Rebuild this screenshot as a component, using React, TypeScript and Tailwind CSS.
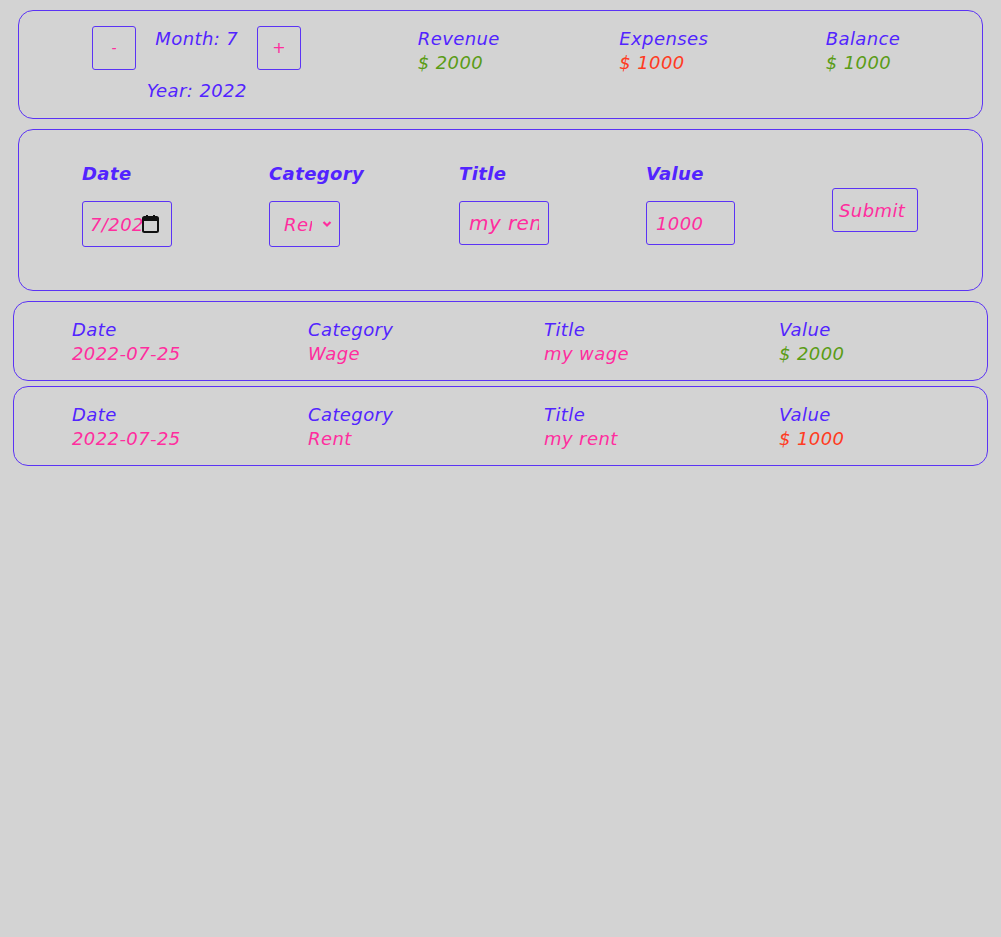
import React from "react";

const P = "text-[#5224ff]";
const PINK = "text-[#ff2d9e]";
const GREEN = "text-[#5a9c16]";
const RED = "text-[#ff3b22]";

function Stat({ label, value, color, w }: { label: string; value: string; color: string; w: string }) {
  return (
    <div className={`${w} flex flex-col whitespace-nowrap`}>
      <span className={`${P} leading-6`}>{label}</span>
      <span className={`${color} leading-6`}>{value}</span>
    </div>
  );
}

function Row({ date, cat, title, value, color }: { date: string; cat: string; title: string; value: string; color: string }) {
  const items = [
    ["Date", date, PINK],
    ["Category", cat, PINK],
    ["Title", title, PINK],
    ["Value", value, color],
  ];
  return (
    <div className="border border-[#5b33f5] rounded-[15px] pt-[16px] pb-[14px] pl-[58px] grid grid-cols-[236px_236px_235px_1fr]">
      {items.map(([l, v, c]) => (
        <div key={l} className="flex flex-col whitespace-nowrap">
          <span className={`${P} leading-6`}>{l}</span>
          <span className={`${c} leading-6`}>{v}</span>
        </div>
      ))}
    </div>
  );
}

export default function App() {
  return (
    <div
      className="min-h-screen bg-[#d3d3d3] pt-[10px] italic font-extralight text-[18px] tracking-[0.4px]"
      style={{ fontFamily: '"DejaVu Sans", sans-serif' }}
    >
      {/* Summary card */}
      <div className="mx-[18px] border border-[#5b33f5] rounded-[15px] p-[15px] flex justify-around items-start">
        <div className="w-[209px] flex flex-col items-center">
          <div className="flex items-start gap-4">
            <button className={`w-[44px] h-[44px] border border-[#5b33f5] rounded-[3px] ${PINK} text-[14px] flex items-center justify-center`}>
              -
            </button>
            <span className={`${P} leading-6 pt-[1px] w-[89px] text-center whitespace-nowrap`}>Month: 7</span>
            <button className={`w-[44px] h-[44px] border border-[#5b33f5] rounded-[3px] ${PINK} text-[16px] flex items-center justify-center`}>
              +
            </button>
          </div>
          <span className={`${P} leading-6 mt-[9px] whitespace-nowrap`}>Year: 2022</span>
        </div>
        <div className="pt-[1px] flex">
          <Stat label="Revenue" value="$ 2000" color={GREEN} w="w-[85px]" />
        </div>
        <div className="pt-[1px] flex">
          <Stat label="Expenses" value="$ 1000" color={RED} w="w-[90px]" />
        </div>
        <div className="pt-[1px] flex">
          <Stat label="Balance" value="$ 1000" color={GREEN} w="w-[83px]" />
        </div>
      </div>

      {/* Form card */}
      <div className="mx-[18px] mt-[10px] border border-[#5b33f5] rounded-[15px] pt-[31px] pb-[43px] pl-[63px] grid grid-cols-[187px_190px_187px_186px_1fr] items-start">
        <div className="flex flex-col">
          <span className={`${P} leading-6 font-bold pt-[1px]`}>Date</span>
          <div className="mt-[15px] w-[90px] h-[46px] border border-[#5b33f5] rounded-[3px] flex items-center pl-[7px] pr-[12px] overflow-hidden">
            <span className={`${PINK} w-[52px] overflow-hidden whitespace-nowrap`}>7/2022</span>
            <svg width="17" height="18" viewBox="0 0 17 18" className="ml-auto shrink-0">
              <rect x="1" y="2" width="15" height="15" rx="1.5" fill="none" stroke="#111" strokeWidth="2" />
              <rect x="1" y="2" width="15" height="4" fill="#111" />
              <rect x="4" y="0" width="2" height="3" fill="#111" />
              <rect x="11" y="0" width="2" height="3" fill="#111" />
            </svg>
          </div>
        </div>
        <div className="flex flex-col">
          <span className={`${P} leading-6 font-bold pt-[1px]`}>Category</span>
          <div className="mt-[15px] w-[71px] h-[46px] border border-[#5b33f5] rounded-[3px] flex items-center pl-[14px] pr-[7px]">
            <span className={`${PINK} w-[28px] overflow-hidden whitespace-nowrap`}>Rent</span>
            <svg width="10" height="8" viewBox="0 0 10 8" className="ml-auto">
              <path d="M1.5 2 L5 5.5 L8.5 2" fill="none" stroke="#ff2d9e" strokeWidth="2.2" />
            </svg>
          </div>
        </div>
        <div className="flex flex-col">
          <span className={`${P} leading-6 font-bold pt-[1px]`}>Title</span>
          <div className="mt-[15px] w-[90px] h-[44px] border border-[#5b33f5] rounded-[3px] flex items-center pl-[9px] overflow-hidden">
            <span className={`${PINK} text-[20px] w-[70px] overflow-hidden whitespace-nowrap`}>my rent</span>
          </div>
        </div>
        <div className="flex flex-col">
          <span className={`${P} leading-6 font-bold pt-[1px]`}>Value</span>
          <div className="mt-[15px] w-[89px] h-[44px] border border-[#5b33f5] rounded-[3px] flex items-center pl-[9px]">
            <span className={PINK}>1000</span>
          </div>
        </div>
        <div className="mt-[27px]">
          <button className={`w-[86px] h-[44px] border border-[#5b33f5] rounded-[3px] ${PINK} italic font-extralight tracking-[0.4px] flex items-center pl-[6px] whitespace-nowrap overflow-hidden`}>
            Submit
          </button>
        </div>
      </div>

      <div className="mx-[13px] mt-[10px]">
        <Row date="2022-07-25" cat="Wage" title="my wage" value="$ 2000" color={GREEN} />
      </div>
      <div className="mx-[13px] mt-[5px]">
        <Row date="2022-07-25" cat="Rent" title="my rent" value="$ 1000" color={RED} />
      </div>
    </div>
  );
}
